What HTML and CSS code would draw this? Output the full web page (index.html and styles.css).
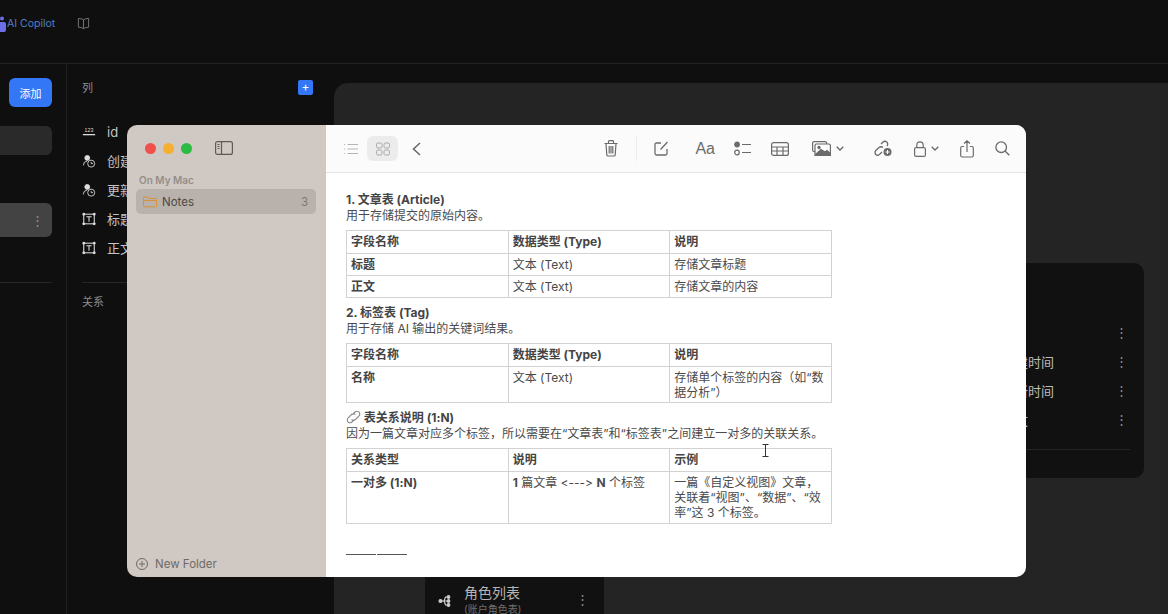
FILE: index.html
```html
<!DOCTYPE html>
<html lang="en">
<head>
    <meta charset="UTF-8">
    <meta name="viewport" content="width=device-width, initial-scale=1.0">
    <title>AI Copilot</title>
    <link rel="stylesheet" href="styles.css">
</head>
<body>
    <header class="topbar">
        <svg class="copilot-icon" width="6" height="16" viewBox="0 0 6 16"><circle cx="2" cy="2.5" r="2" fill="#6d6fe8"/><rect x="-2" y="6" width="8" height="10" rx="2" fill="#6d6fe8"/></svg>
        <span class="copilot-name">AI Copilot</span>
        <svg class="book-icon" width="13" height="13" viewBox="0 0 14 14" fill="none" stroke="#77787a"><path d="M7 3 Q4.5 1.5 1.5 1.5 V11 Q4.5 11 7 12.5 Q9.5 11 12.5 11 V1.5 Q9.5 1.5 7 3 Z M7 3 V12.5"/></svg>
    </header>

    <div class="workspace">
        <aside class="tables-panel">
            <div class="add-row"><button class="add-btn">添加</button></div>
            <div class="table-item"></div>
            <div class="table-item table-item-active"><span class="dots">⋮</span></div>
            <div class="panel-rule"></div>
        </aside>

        <section class="columns-panel">
            <div class="columns-head">
                <span>列</span>
                <span class="plus-btn">+</span>
            </div>
            <ul class="column-list">
                <li><svg width="14" height="14" viewBox="0 0 16 16"><text x="8" y="8" font-size="6" text-anchor="middle" fill="#ddd" font-family="Liberation Sans">123</text><path d="M1 11 H15" stroke="#ddd" stroke-width="1.500"/></svg>id</li>
                <li><svg width="14" height="14" viewBox="0 0 16 16" fill="none" stroke="#ddd"><circle cx="6" cy="4.500" r="2.800" fill="#ddd"/><path d="M1.500 13 Q1.500 8.500 6 8"/><circle cx="10.500" cy="11" r="4"/><path d="M10.500 9 V11 H12.500"/></svg>创建时间</li>
                <li><svg width="14" height="14" viewBox="0 0 16 16" fill="none" stroke="#ddd"><circle cx="6" cy="4.500" r="2.800" fill="#ddd"/><path d="M1.500 13 Q1.500 8.500 6 8"/><circle cx="10.500" cy="11" r="4"/><path d="M10.500 9 V11 H12.500"/></svg>更新时间</li>
                <li><svg width="14" height="14" viewBox="0 0 16 16" fill="none" stroke="#ddd" stroke-width="1.200"><rect x="2" y="2.500" width="12" height="11"/><path d="M5 5.500 H11 M8 5.500 V11"/><circle cx="2" cy="2.500" r="1" fill="#ddd"/><circle cx="14" cy="2.500" r="1" fill="#ddd"/><circle cx="2" cy="13.500" r="1" fill="#ddd"/><circle cx="14" cy="13.500" r="1" fill="#ddd"/></svg>标题</li>
                <li><svg width="14" height="14" viewBox="0 0 16 16" fill="none" stroke="#ddd" stroke-width="1.200"><rect x="2" y="2.500" width="12" height="11"/><path d="M5 5.500 H11 M8 5.500 V11"/><circle cx="2" cy="2.500" r="1" fill="#ddd"/><circle cx="14" cy="2.500" r="1" fill="#ddd"/><circle cx="2" cy="13.500" r="1" fill="#ddd"/><circle cx="14" cy="13.500" r="1" fill="#ddd"/></svg>正文</li>
            </ul>
            <div class="columns-rule"></div>
            <div class="relations-head">关系</div>
        </section>

        <main class="canvas">
            <div class="view-card">
                <div class="view-row"><span></span><span class="dots">⋮</span></div>
                <div class="view-row"><span>创建时间</span><span class="dots">⋮</span></div>
                <div class="view-row"><span>更新时间</span><span class="dots">⋮</span></div>
                <div class="view-row"><span>正文</span><span class="dots">⋮</span></div>
                <div class="view-rule"></div>
            </div>
            <div class="role-card">
                <svg width="14" height="14" viewBox="0 0 14 14" fill="#ccc" stroke="#ccc" stroke-width="1.200"><path d="M3 7 H9 M6 7 L7.500 3 H10 M6 7 L7.500 11 H10" fill="none"/><circle cx="2.500" cy="7" r="1.500"/><circle cx="10.500" cy="3" r="1.300"/><circle cx="10.500" cy="7" r="1.300"/><circle cx="10.500" cy="11" r="1.300"/></svg>
                <div class="role-text">
                    <div class="role-name">角色列表</div>
                    <div class="role-sub">(账户角色表)</div>
                </div>
                <span class="dots">⋮</span>
            </div>
        </main>
    </div>

    <div class="notes-window">
        <aside class="notes-sidebar">
            <div class="traffic">
                <span class="light light-red"></span>
                <span class="light light-yellow"></span>
                <span class="light light-green"></span>
                <svg class="sidebar-toggle" width="18" height="14" viewBox="0 0 18 14" fill="none" stroke="#5f5a57" stroke-width="1.200"><rect x="0.600" y="0.600" width="16.800" height="12.800" rx="2"/><path d="M6.500 1 V13"/><path d="M2.500 3.500 H4.500 M2.500 5.500 H4.500 M2.500 7.500 H4.500"/></svg>
            </div>
            <div class="sidebar-label">On My Mac</div>
            <div class="folder-row">
                <svg width="14" height="12" viewBox="0 0 14 12" fill="none" stroke="#d9923a" stroke-width="1"><path d="M0.500 9.500 V2 Q0.500 1 1.500 1 H5 L6 2.500 H12.500 Q13.500 2.500 13.500 3.500 V9.500 Q13.500 10.800 12.500 10.800 H1.500 Q0.500 10.800 0.500 9.500 Z M0.500 4.500 H13.500"/></svg>
                <span class="folder-name">Notes</span>
                <span class="folder-count">3</span>
            </div>
            <div class="new-folder">
                <svg width="12" height="12" viewBox="0 0 12 12" fill="none" stroke="#6f6a66"><circle cx="6" cy="6" r="5.500"/><path d="M6 3 V9 M3 6 H9"/></svg>
                New Folder
            </div>
        </aside>

        <div class="notes-main">
            <div class="toolbar">
                <svg class="tool-list" width="16" height="12" viewBox="0 0 16 12" fill="none" stroke="#b5b5b5"><path d="M4.500 1.500 H15 M4.500 6 H15 M4.500 10.500 H15 M1 1.500 H2 M1 6 H2 M1 10.500 H2"/></svg>
                <span class="view-toggle">
                    <svg width="14" height="14" viewBox="0 0 14 14" fill="none" stroke="#a9a9a9"><rect x="0.500" y="1" width="5.500" height="5" rx="1.500"/><rect x="8" y="1" width="5.500" height="5" rx="1.500"/><rect x="0.500" y="8" width="5.500" height="5" rx="1.500"/><rect x="8" y="8" width="5.500" height="5" rx="1.500"/></svg>
                </span>
                <svg width="9" height="14" viewBox="0 0 9 14" fill="none" stroke="#666" stroke-width="1.500"><path d="M8 1 L1.500 7 L8 13"/></svg>

                <span class="toolbar-gap"></span>

                <svg width="14" height="17" viewBox="0 0 14 17" fill="none" stroke="#6b6b6b" stroke-width="1.200"><path d="M0.500 3.500 H13.500 M4.500 3 V1.500 Q4.500 0.700 5.500 0.700 H8.500 Q9.500 0.700 9.500 1.500 V3 M2 3.500 L2.800 15 Q2.900 16 4 16 H10 Q11.100 16 11.200 15 L12 3.500 M5.200 6 V13.500 M7 6 V13.500 M8.800 6 V13.500"/></svg>
                <span class="toolbar-sep"></span>
                <svg class="tool-compose" width="15" height="15" viewBox="0 0 15 15" fill="none" stroke="#6b6b6b" stroke-width="1.300"><path d="M7 2 H2.500 Q1 2 1 3.500 V12.500 Q1 14 2.500 14 H11.500 Q13 14 13 12.500 V8 M6.500 8.500 L13.500 1"/></svg>
                <span class="tool-text">Aa</span>
                <svg class="tool-check" width="17" height="15" viewBox="0 0 17 15" fill="none" stroke="#6b6b6b" stroke-width="1.200"><circle cx="3" cy="3.500" r="2.300" fill="#6b6b6b"/><circle cx="3" cy="11.500" r="2.300"/><path d="M8 3.500 H17 M8 11.500 H17"/></svg>
                <svg class="tool-table" width="18" height="14" viewBox="0 0 18 14" fill="none" stroke="#6b6b6b" stroke-width="1.200"><rect x="0.600" y="0.600" width="16.800" height="12.800" rx="2"/><path d="M0.600 5 H17.400 M0.600 9 H17.400 M6 5 V13.400 M12 5 V13.400"/></svg>
                <span class="tool-media">
                    <svg width="19" height="15" viewBox="0 0 19 15" fill="none" stroke="#6b6b6b" stroke-width="1.200"><rect x="0.600" y="0.600" width="14" height="10" rx="1.500"/><rect x="3" y="3" width="15.400" height="11.400" rx="1.500" fill="#fff"/><path d="M3 14 L9 8.500 L13 11 L15 9.500 L18.400 12.500 V14.400 H3 Z" fill="#6b6b6b"/><circle cx="7" cy="6.500" r="1.100" fill="#6b6b6b"/></svg>
                    <svg width="8" height="5" viewBox="0 0 8 5" fill="none" stroke="#6b6b6b" stroke-width="1.300"><path d="M0.700 0.700 L4 4 L7.300 0.700"/></svg>
                </span>
                <svg class="tool-link" width="18" height="17" viewBox="0 0 18 17" fill="none" stroke="#6b6b6b" stroke-width="1.300"><path d="M7 4 L9 2 Q10.800 0.500 12.800 2 Q14.500 4 13 6 M8 12 L5.500 14.500 Q3.500 16 1.800 14.500 Q0.300 12.500 1.800 10.500 L5 7.500 Q7 6 9 7.500"/><circle cx="13.500" cy="12" r="4" fill="#6b6b6b" stroke="none"/><path d="M13.500 10 V14 M11.500 12 H15.500" stroke="#fff" stroke-width="1"/></svg>
                <span class="tool-lock">
                    <svg width="12" height="16" viewBox="0 0 12 16" fill="none" stroke="#6b6b6b" stroke-width="1.200"><rect x="0.600" y="6.600" width="10.800" height="8.800" rx="1.500"/><path d="M2.800 6.500 V4 Q2.800 0.800 6 0.800 Q9.200 0.800 9.200 4 V6.500"/></svg>
                    <svg width="8" height="5" viewBox="0 0 8 5" fill="none" stroke="#6b6b6b" stroke-width="1.300"><path d="M0.700 0.700 L4 4 L7.300 0.700"/></svg>
                </span>
                <svg class="tool-share" width="14" height="18" viewBox="0 0 14 18" fill="none" stroke="#6b6b6b" stroke-width="1.200"><path d="M4 6.500 H2 Q0.700 6.500 0.700 8 V15.500 Q0.700 17 2 17 H12 Q13.300 17 13.300 15.500 V8 Q13.300 6.500 12 6.500 H10 M7 12 V1 M4 3.500 L7 0.800 L10 3.500"/></svg>
                <svg class="tool-search" width="15" height="15" viewBox="0 0 15 15" fill="none" stroke="#6b6b6b" stroke-width="1.300"><circle cx="6.200" cy="6.200" r="5.300"/><path d="M10 10 L14.300 14.300"/></svg>
            </div>

            <div class="note-body">
                <h3 class="note-title">1. 文章表 (Article)</h3>
                <p class="note-line">用于存储提交的原始内容。</p>
                <table class="note-table">
                    <tr><th>字段名称</th><th>数据类型 (Type)</th><th>说明</th></tr>
                    <tr><th>标题</th><td>文本 (Text)</td><td>存储文章标题</td></tr>
                    <tr><th>正文</th><td>文本 (Text)</td><td>存储文章的内容</td></tr>
                </table>

                <h3 class="note-title">2. 标签表 (Tag)</h3>
                <p class="note-line">用于存储 AI 输出的关键词结果。</p>
                <table class="note-table note-table-tag">
                    <tr><th>字段名称</th><th>数据类型 (Type)</th><th>说明</th></tr>
                    <tr><th>名称</th><td>文本 (Text)</td><td>存储单个标签的内容（如“数据分析”）</td></tr>
                </table>

                <h3 class="note-title"><svg width="15" height="14" viewBox="0 0 15 14" fill="none" stroke="#8a8a8a" stroke-width="1.100"><path d="M6.500 4.500 L9 2 Q11 0.500 13 2 Q14.500 4 13 6 L9.500 9.500 Q7.500 11 5.500 9.500 M8.500 9.500 L6 12 Q4 13.500 2 12 Q0.500 10 2 8 L5.500 4.500 Q7.500 3 9.500 4.500"/></svg> 表关系说明 (1:N)</h3>
                <p class="note-line">因为一篇文章对应多个标签，所以需要在“文章表”和“标签表”之间建立一对多的关联关系。</p>
                <table class="note-table">
                    <tr><th>关系类型</th><th>说明</th><th>示例</th></tr>
                    <tr><th>一对多 (1:N)</th><td><b>1</b> 篇文章 &lt;---&gt; <b>N</b> 个标签</td><td>一篇《自定义视图》文章，<br>关联着“视图”、“数据”、“效率”这 3 个标签。</td></tr>
                </table>

                <div class="note-dash"><span></span><span></span></div>
            </div>
        </div>

        <svg class="ibeam" width="7" height="13" viewBox="0 0 7 13" fill="none" stroke="#333" stroke-width="1"><path d="M0.500 0.500 H6.500 M0.500 12.500 H6.500 M3.500 0.500 V12.500"/></svg>
    </div>
</body>
</html>
```

FILE: styles.css
```css
* {
    box-sizing: border-box;
}

html, body {
    margin: 0;
    padding: 0;
    height: 100%;
    overflow: hidden;
}

body {
    position: relative;
    background-color: #0f0f10;
    color: #c9c9c9;
    font-family: "Inter", "Noto Sans CJK SC", sans-serif;
    font-size: 12px;
}

/* top bar */
.topbar {
    display: flex;
    align-items: center;
    height: 64px;
    padding-bottom: 16px;
    border-bottom: 1px solid #232325;
}

.copilot-name {
    margin-left: 1px;
    color: #4f7fc4;
    font-size: 10.500px;
}

.book-icon {
    margin-left: 22px;
}

.workspace {
    display: flex;
    height: 550px;
}

/* left panel */
.tables-panel {
    width: 67px;
    padding-top: 14px;
    border-right: 1px solid #202022;
    flex-shrink: 0;
}

.add-row {
    height: 48px;
}

.add-btn {
    display: block;
    width: 43px;
    height: 29px;
    margin-left: 9px;
    padding: 0;
    background-color: #3477f6;
    color: #fff;
    border: none;
    border-radius: 6px;
    font-family: inherit;
    font-size: 11px;
}

.table-item {
    width: 52px;
    height: 29px;
    margin-bottom: 48px;
    background-color: #2a2a2a;
    border-radius: 0 6px 6px 0;
}

.table-item-active {
    display: flex;
    align-items: center;
    justify-content: flex-end;
    height: 34px;
    margin-bottom: 45px;
    padding-right: 8px;
    background-color: #434343;
}

.panel-rule {
    width: 52px;
    height: 1px;
    background-color: #262628;
}

.dots {
    color: #8e8e8e;
    font-size: 13px;
    line-height: 1;
}

/* columns */
.columns-panel {
    width: 267px;
    padding: 14px 21px 0 15px;
    flex-shrink: 0;
}

.columns-head {
    display: flex;
    align-items: center;
    justify-content: space-between;
    height: 18px;
    margin-bottom: 21px;
    color: #8c8c8c;
    font-size: 11px;
}

.plus-btn {
    display: flex;
    align-items: center;
    justify-content: center;
    width: 15px;
    height: 15px;
    background-color: #3477f6;
    color: #fff;
    border-radius: 2px;
    font-size: 12px;
    line-height: 1;
}

.column-list {
    margin: 0;
    padding: 0;
    list-style: none;
}

.column-list li {
    display: flex;
    align-items: center;
    gap: 11px;
    height: 29px;
    color: #c4c4c4;
    font-size: 13px;
}

.columns-rule {
    height: 1px;
    margin-top: 20px;
    background-color: #262628;
}

.relations-head {
    margin-top: 10px;
    color: #8c8c8c;
    font-size: 11px;
}

/* canvas behind the window */
.canvas {
    position: relative;
    flex: 1;
    margin-top: 19px;
    background-color: #242424;
    border-top-left-radius: 14px;
}

.view-card {
    position: absolute;
    top: 180px;
    right: 24px;
    width: 170px;
    height: 215px;
    padding: 55px 16px 0 28px;
    background-color: #111112;
    border-radius: 10px;
}

.view-row {
    display: flex;
    align-items: center;
    justify-content: space-between;
    height: 29px;
    color: #bdbdbd;
    font-size: 13px;
}

.view-rule {
    height: 1px;
    margin: 15px -2px 0 0;
    background-color: #252527;
}

.role-card {
    position: absolute;
    top: 494px;
    left: 91px;
    display: flex;
    align-items: flex-start;
    gap: 12px;
    width: 179px;
    height: 60px;
    padding: 7px 15px 0 13px;
    background-color: #111112;
}

.role-card svg {
    margin-top: 10px;
}

.role-card .dots {
    margin-top: 9px;
}

.role-text {
    flex: 1;
}

.role-name {
    color: #b5b5b5;
    font-size: 14px;
    line-height: 18px;
}

.role-sub {
    color: #6f6f6f;
    font-size: 10px;
    line-height: 14px;
}

/* notes window */
.notes-window {
    position: absolute;
    top: 125px;
    left: 127px;
    display: flex;
    width: 899px;
    height: 452px;
    border-radius: 10px;
    overflow: hidden;
}

.notes-sidebar {
    position: relative;
    width: 199px;
    padding: 0 10px 0 9px;
    background-color: #d0c8c2;
    flex-shrink: 0;
}

.traffic {
    display: flex;
    align-items: center;
    height: 46px;
    padding-left: 9px;
}

.light {
    width: 11px;
    height: 11px;
    margin-right: 7px;
    border-radius: 50%;
}

.light-red {
    background-color: #f0504c;
}

.light-yellow {
    background-color: #f4b02e;
}

.light-green {
    background-color: #2dbc43;
}

.sidebar-toggle {
    margin-left: 16px;
}

.sidebar-label {
    height: 18px;
    padding-left: 3px;
    color: #958f8a;
    font-size: 10px;
    font-weight: 600;
    line-height: 18px;
}

.folder-row {
    display: flex;
    align-items: center;
    height: 25px;
    padding: 0 3px 0 7px;
    background-color: #b9b1ab;
    border-radius: 5px;
    color: #4c4845;
    font-size: 11.500px;
}

.folder-name {
    flex: 1;
    margin-left: 5px;
}

.folder-count {
    color: #7d7873;
    margin-right: 5px;
}

.new-folder {
    position: absolute;
    left: 9px;
    bottom: 6px;
    display: flex;
    align-items: center;
    gap: 7px;
    color: #6f6a66;
    font-size: 11.500px;
}

.notes-main {
    flex: 1;
    background-color: #fff;
}

.toolbar {
    display: flex;
    align-items: center;
    height: 48px;
    padding: 0 16px 0 17px;
    background-color: #fbfbfb;
    border-bottom: 1px solid #e4e4e4;
}

.tool-list {
    margin-right: 8px;
}

.view-toggle {
    display: flex;
    align-items: center;
    justify-content: center;
    width: 31px;
    height: 25px;
    margin-right: 14px;
    background-color: #ececec;
    border-radius: 6px;
}

.toolbar-gap {
    flex: 1;
}

.toolbar-sep {
    width: 1px;
    height: 25px;
    margin-left: 18px;
    background-color: #ececec;
}

.tool-compose {
    margin-left: 17px;
}

.tool-text {
    margin-left: 26px;
    color: #6b6b6b;
    font-family: "Liberation Sans", sans-serif;
    font-size: 16px;
}

.tool-check {
    margin-left: 19px;
}

.tool-table {
    margin-left: 20px;
}

.tool-media, .tool-lock {
    display: flex;
    align-items: center;
    gap: 5px;
}

.tool-media {
    margin-left: 23px;
}

.tool-link {
    margin-left: 30px;
}

.tool-lock {
    margin-left: 22px;
}

.tool-share {
    margin-left: 21px;
}

.tool-search {
    margin-left: 21px;
}

/* note content */
.note-body {
    width: 486px;
    margin-left: 20px;
    padding-top: 19px;
    color: #4a4a4a;
    font-size: 12px;
    font-variant-ligatures: none;
    line-height: 15px;
}

.note-title {
    margin: 0;
    font-size: 12px;
    font-weight: 700;
    line-height: 16px;
    color: #444;
}

.note-title svg {
    vertical-align: -2px;
}

.note-line {
    margin: 0 0 7px;
}

.note-table {
    width: 100%;
    margin-bottom: 7px;
    border-collapse: collapse;
    table-layout: fixed;
}

.note-table th, .note-table td {
    padding: 3px 4px;
    border: 1px solid #d2d2d2;
    font-weight: 400;
    text-align: left;
    vertical-align: top;
}

.note-table tr:first-child > * {
    padding-bottom: 4px;
}

.note-table-tag tr:last-child > * {
    padding-bottom: 2px;
}

.note-table th {
    font-weight: 700;
    color: #444;
}

.note-dash {
    display: flex;
    gap: 1px;
    margin-top: 30px;
}

.note-dash span {
    width: 30px;
    height: 1px;
    background-color: #555;
}

.ibeam {
    position: absolute;
    top: 319px;
    left: 635px;
}
```
